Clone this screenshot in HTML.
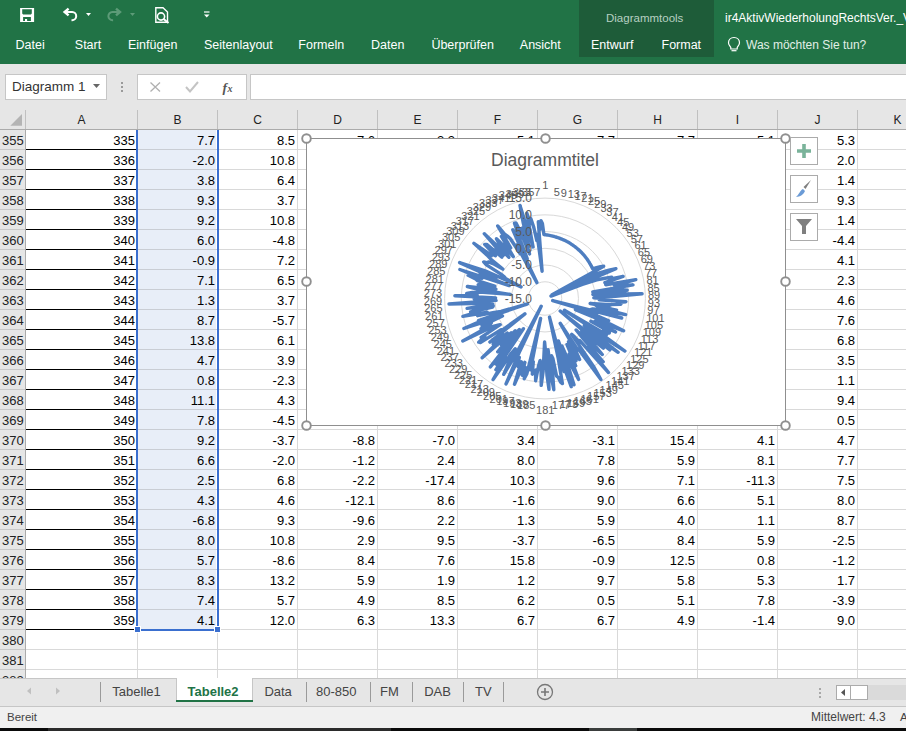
<!DOCTYPE html><html><head><meta charset="utf-8"><style>
html,body{margin:0;padding:0;}body{width:906px;height:731px;overflow:hidden;position:relative;background:#fff;font-family:"Liberation Sans", sans-serif;}
div{box-sizing:border-box;}
.c{position:absolute;height:20px;line-height:22px;font-size:13px;color:#000;text-align:right;white-space:nowrap;}
.rh{position:absolute;left:0;width:25px;height:20px;line-height:22px;font-size:13px;color:#222;text-align:left;padding-left:2px;}
.ch{position:absolute;top:108px;height:21px;line-height:25px;font-size:12px;color:#222;text-align:center;}
.tb{position:absolute;top:30px;height:30px;line-height:30px;font-size:12.5px;color:#fff;white-space:nowrap;}
.st{position:absolute;top:678px;height:27px;line-height:27px;font-size:13px;color:#444;white-space:nowrap;}
</style></head><body>
<div style="position:absolute;left:0px;top:0px;width:906px;height:64px;background:#217346;"></div>
<div style="position:absolute;left:579px;top:0px;width:135px;height:57px;background:#1e5c39;"></div>
<div class="tb" style="left:15.6px;">Datei</div>
<div class="tb" style="left:74.8px;">Start</div>
<div class="tb" style="left:128.0px;">Einfügen</div>
<div class="tb" style="left:204.0px;">Seitenlayout</div>
<div class="tb" style="left:298.3px;">Formeln</div>
<div class="tb" style="left:371.0px;">Daten</div>
<div class="tb" style="left:431.4px;">Überprüfen</div>
<div class="tb" style="left:519.8px;">Ansicht</div>
<div class="tb" style="left:591.0px;">Entwurf</div>
<div class="tb" style="left:661.5px;">Format</div>
<div style="position:absolute;left:606px;top:10px;font-size:11.5px;line-height:16px;color:#b7d0c1;white-space:nowrap;">Diagrammtools</div>
<div style="position:absolute;left:725px;top:9.5px;font-size:12px;line-height:16px;color:#fff;white-space:nowrap;">ir4AktivWiederholungRechtsVer._V</div>
<div class="tb" style="left:746px;color:#e2efe7;font-size:12px;">Was möchten Sie tun?</div>
<svg style="position:absolute;left:726px;top:36px" width="16" height="16"><path d="M8 1.5 C4.5 1.5 2.5 4 2.5 6.8 C2.5 9 4 10 4.8 11.5 V13 H11.2 V11.5 C12 10 13.5 9 13.5 6.8 C13.5 4 11.5 1.5 8 1.5 Z" fill="none" stroke="#fff" stroke-width="1.2"/><path d="M5.5 14.7 H10.5" stroke="#fff" stroke-width="1.2"/></svg>
<svg style="position:absolute;left:0;top:0" width="240" height="30" viewBox="0 0 240 30">
<path fill-rule="evenodd" fill="#fff" d="M20.1 7.9 H34.1 V22.1 H20.1 Z M22.2 9.3 V13.6 L23.1 14.5 H30.9 L31.8 13.6 V9.3 Z M23.1 17 V21 H25 V19 H27.1 V21 H30.9 V17 Z"/>
<path d="M65 12 H72.2 A4.1 4.1 0 0 1 72 20.2 H71.5" fill="none" stroke="#fff" stroke-width="2"/>
<path d="M68.6 8.6 L64.6 12 L68.6 15.4" fill="none" stroke="#fff" stroke-width="2.4"/>
<path d="M86 13 H91 L88.5 16 Z" fill="#fff"/>
<path d="M119.6 12 H112.4 A4.1 4.1 0 0 0 112.6 20.2 H113.1" fill="none" stroke="#5d9b78" stroke-width="2"/>
<path d="M116 8.6 L120 12 L116 15.4" fill="none" stroke="#5d9b78" stroke-width="2.4"/>
<path d="M130 13 H135 L132.5 16 Z" fill="#5d9b78"/>
<path d="M155.8 7.8 H163 L167.5 12 V22.2 H155.8 Z" fill="none" stroke="#fff" stroke-width="1.4"/>
<circle cx="161" cy="16.5" r="3.6" fill="#217346" stroke="#fff" stroke-width="1.6"/>
<path d="M163.6 19 L168.5 23" stroke="#fff" stroke-width="2"/>
<path d="M204 12 H209.5" stroke="#fff" stroke-width="1.2"/>
<path d="M204 14.5 H209.5 L206.75 17.5 Z" fill="#fff"/>
</svg>
<div style="position:absolute;left:0px;top:64px;width:906px;height:45px;background:#e6e6e6;"></div>
<div style="position:absolute;left:5px;top:74px;width:102px;height:26px;background:#fff;border:1px solid #c6c6c6;"></div>
<div style="position:absolute;left:12px;top:79px;font-size:13.5px;line-height:16px;color:#333;white-space:nowrap;">Diagramm 1</div>
<svg style="position:absolute;left:90px;top:78px" width="16" height="16"><path d="M3 6 H10 L6.5 10 Z" fill="#666"/></svg>
<div style="position:absolute;left:121px;top:82px;width:2px;height:2px;background:#9a9a9a;"></div>
<div style="position:absolute;left:121px;top:86px;width:2px;height:2px;background:#9a9a9a;"></div>
<div style="position:absolute;left:121px;top:90px;width:2px;height:2px;background:#9a9a9a;"></div>
<div style="position:absolute;left:137px;top:74px;width:110px;height:26px;background:#fff;border:1px solid #c6c6c6;"></div>
<div style="position:absolute;left:250px;top:74px;width:700px;height:26px;background:#fff;border:1px solid #c6c6c6;"></div>
<svg style="position:absolute;left:137px;top:74px" width="110" height="26">
<path d="M13.5 8.5 L23 17.5 M23 8.5 L13.5 17.5" stroke="#b0b0b0" stroke-width="1.3"/>
<path d="M49 13 L53 17.5 L61 8" fill="none" stroke="#c4c4c4" stroke-width="2"/>
<text x="85.5" y="17.5" font-family="Liberation Serif" font-style="italic" font-weight="bold" font-size="13.5" fill="#555">f</text>
<text x="90.5" y="18" font-family="Liberation Serif" font-style="italic" font-weight="bold" font-size="10" fill="#555">x</text>
</svg>
<div style="position:absolute;left:0px;top:108px;width:906px;height:22px;background:#e6e6e6;"></div>
<div style="position:absolute;left:0px;top:129px;width:906px;height:1px;background:#ababab;"></div>
<svg style="position:absolute;left:0;top:108px" width="26" height="21"><path d="M22 6 V17.7 H10.3 Z" fill="#b4b4b4"/></svg>
<div class="ch" style="left:26px;width:111px;">A</div>
<div class="ch" style="left:138px;width:79px;">B</div>
<div class="ch" style="left:218px;width:79px;">C</div>
<div class="ch" style="left:298px;width:79px;">D</div>
<div class="ch" style="left:378px;width:79px;">E</div>
<div class="ch" style="left:458px;width:79px;">F</div>
<div class="ch" style="left:538px;width:79px;">G</div>
<div class="ch" style="left:618px;width:79px;">H</div>
<div class="ch" style="left:698px;width:79px;">I</div>
<div class="ch" style="left:778px;width:79px;">J</div>
<div class="ch" style="left:858px;width:79px;">K</div>
<div style="position:absolute;left:25px;top:110px;width:1px;height:19px;background:#c0c0c0;"></div>
<div style="position:absolute;left:137px;top:110px;width:1px;height:19px;background:#c0c0c0;"></div>
<div style="position:absolute;left:217px;top:110px;width:1px;height:19px;background:#c0c0c0;"></div>
<div style="position:absolute;left:297px;top:110px;width:1px;height:19px;background:#c0c0c0;"></div>
<div style="position:absolute;left:377px;top:110px;width:1px;height:19px;background:#c0c0c0;"></div>
<div style="position:absolute;left:457px;top:110px;width:1px;height:19px;background:#c0c0c0;"></div>
<div style="position:absolute;left:537px;top:110px;width:1px;height:19px;background:#c0c0c0;"></div>
<div style="position:absolute;left:617px;top:110px;width:1px;height:19px;background:#c0c0c0;"></div>
<div style="position:absolute;left:697px;top:110px;width:1px;height:19px;background:#c0c0c0;"></div>
<div style="position:absolute;left:777px;top:110px;width:1px;height:19px;background:#c0c0c0;"></div>
<div style="position:absolute;left:857px;top:110px;width:1px;height:19px;background:#c0c0c0;"></div>
<div style="position:absolute;left:0px;top:130px;width:26px;height:548px;background:#e6e6e6;"></div>
<div style="position:absolute;left:25px;top:130px;width:1px;height:548px;background:#ababab;"></div>
<div class="rh" style="top:130px;">355</div>
<div style="position:absolute;left:0px;top:149px;width:25px;height:1px;background:#c8c8c8;"></div>
<div class="rh" style="top:150px;">356</div>
<div style="position:absolute;left:0px;top:169px;width:25px;height:1px;background:#c8c8c8;"></div>
<div class="rh" style="top:170px;">357</div>
<div style="position:absolute;left:0px;top:189px;width:25px;height:1px;background:#c8c8c8;"></div>
<div class="rh" style="top:190px;">358</div>
<div style="position:absolute;left:0px;top:209px;width:25px;height:1px;background:#c8c8c8;"></div>
<div class="rh" style="top:210px;">359</div>
<div style="position:absolute;left:0px;top:229px;width:25px;height:1px;background:#c8c8c8;"></div>
<div class="rh" style="top:230px;">360</div>
<div style="position:absolute;left:0px;top:249px;width:25px;height:1px;background:#c8c8c8;"></div>
<div class="rh" style="top:250px;">361</div>
<div style="position:absolute;left:0px;top:269px;width:25px;height:1px;background:#c8c8c8;"></div>
<div class="rh" style="top:270px;">362</div>
<div style="position:absolute;left:0px;top:289px;width:25px;height:1px;background:#c8c8c8;"></div>
<div class="rh" style="top:290px;">363</div>
<div style="position:absolute;left:0px;top:309px;width:25px;height:1px;background:#c8c8c8;"></div>
<div class="rh" style="top:310px;">364</div>
<div style="position:absolute;left:0px;top:329px;width:25px;height:1px;background:#c8c8c8;"></div>
<div class="rh" style="top:330px;">365</div>
<div style="position:absolute;left:0px;top:349px;width:25px;height:1px;background:#c8c8c8;"></div>
<div class="rh" style="top:350px;">366</div>
<div style="position:absolute;left:0px;top:369px;width:25px;height:1px;background:#c8c8c8;"></div>
<div class="rh" style="top:370px;">367</div>
<div style="position:absolute;left:0px;top:389px;width:25px;height:1px;background:#c8c8c8;"></div>
<div class="rh" style="top:390px;">368</div>
<div style="position:absolute;left:0px;top:409px;width:25px;height:1px;background:#c8c8c8;"></div>
<div class="rh" style="top:410px;">369</div>
<div style="position:absolute;left:0px;top:429px;width:25px;height:1px;background:#c8c8c8;"></div>
<div class="rh" style="top:430px;">370</div>
<div style="position:absolute;left:0px;top:449px;width:25px;height:1px;background:#c8c8c8;"></div>
<div class="rh" style="top:450px;">371</div>
<div style="position:absolute;left:0px;top:469px;width:25px;height:1px;background:#c8c8c8;"></div>
<div class="rh" style="top:470px;">372</div>
<div style="position:absolute;left:0px;top:489px;width:25px;height:1px;background:#c8c8c8;"></div>
<div class="rh" style="top:490px;">373</div>
<div style="position:absolute;left:0px;top:509px;width:25px;height:1px;background:#c8c8c8;"></div>
<div class="rh" style="top:510px;">374</div>
<div style="position:absolute;left:0px;top:529px;width:25px;height:1px;background:#c8c8c8;"></div>
<div class="rh" style="top:530px;">375</div>
<div style="position:absolute;left:0px;top:549px;width:25px;height:1px;background:#c8c8c8;"></div>
<div class="rh" style="top:550px;">376</div>
<div style="position:absolute;left:0px;top:569px;width:25px;height:1px;background:#c8c8c8;"></div>
<div class="rh" style="top:570px;">377</div>
<div style="position:absolute;left:0px;top:589px;width:25px;height:1px;background:#c8c8c8;"></div>
<div class="rh" style="top:590px;">378</div>
<div style="position:absolute;left:0px;top:609px;width:25px;height:1px;background:#c8c8c8;"></div>
<div class="rh" style="top:610px;">379</div>
<div style="position:absolute;left:0px;top:629px;width:25px;height:1px;background:#c8c8c8;"></div>
<div class="rh" style="top:630px;">380</div>
<div style="position:absolute;left:0px;top:649px;width:25px;height:1px;background:#c8c8c8;"></div>
<div class="rh" style="top:650px;">381</div>
<div style="position:absolute;left:0px;top:669px;width:25px;height:1px;background:#c8c8c8;"></div>
<div class="rh" style="top:670px;">382</div>
<div style="position:absolute;left:0px;top:689px;width:25px;height:1px;background:#c8c8c8;"></div>
<div style="position:absolute;left:137px;top:130px;width:1px;height:548px;background:#d9d9d9;"></div>
<div style="position:absolute;left:217px;top:130px;width:1px;height:548px;background:#d9d9d9;"></div>
<div style="position:absolute;left:297px;top:130px;width:1px;height:548px;background:#d9d9d9;"></div>
<div style="position:absolute;left:377px;top:130px;width:1px;height:548px;background:#d9d9d9;"></div>
<div style="position:absolute;left:457px;top:130px;width:1px;height:548px;background:#d9d9d9;"></div>
<div style="position:absolute;left:537px;top:130px;width:1px;height:548px;background:#d9d9d9;"></div>
<div style="position:absolute;left:617px;top:130px;width:1px;height:548px;background:#d9d9d9;"></div>
<div style="position:absolute;left:697px;top:130px;width:1px;height:548px;background:#d9d9d9;"></div>
<div style="position:absolute;left:777px;top:130px;width:1px;height:548px;background:#d9d9d9;"></div>
<div style="position:absolute;left:857px;top:130px;width:1px;height:548px;background:#d9d9d9;"></div>
<div style="position:absolute;left:26px;top:149px;width:880px;height:1px;background:#d9d9d9;"></div>
<div style="position:absolute;left:26px;top:169px;width:880px;height:1px;background:#d9d9d9;"></div>
<div style="position:absolute;left:26px;top:189px;width:880px;height:1px;background:#d9d9d9;"></div>
<div style="position:absolute;left:26px;top:209px;width:880px;height:1px;background:#d9d9d9;"></div>
<div style="position:absolute;left:26px;top:229px;width:880px;height:1px;background:#d9d9d9;"></div>
<div style="position:absolute;left:26px;top:249px;width:880px;height:1px;background:#d9d9d9;"></div>
<div style="position:absolute;left:26px;top:269px;width:880px;height:1px;background:#d9d9d9;"></div>
<div style="position:absolute;left:26px;top:289px;width:880px;height:1px;background:#d9d9d9;"></div>
<div style="position:absolute;left:26px;top:309px;width:880px;height:1px;background:#d9d9d9;"></div>
<div style="position:absolute;left:26px;top:329px;width:880px;height:1px;background:#d9d9d9;"></div>
<div style="position:absolute;left:26px;top:349px;width:880px;height:1px;background:#d9d9d9;"></div>
<div style="position:absolute;left:26px;top:369px;width:880px;height:1px;background:#d9d9d9;"></div>
<div style="position:absolute;left:26px;top:389px;width:880px;height:1px;background:#d9d9d9;"></div>
<div style="position:absolute;left:26px;top:409px;width:880px;height:1px;background:#d9d9d9;"></div>
<div style="position:absolute;left:26px;top:429px;width:880px;height:1px;background:#d9d9d9;"></div>
<div style="position:absolute;left:26px;top:449px;width:880px;height:1px;background:#d9d9d9;"></div>
<div style="position:absolute;left:26px;top:469px;width:880px;height:1px;background:#d9d9d9;"></div>
<div style="position:absolute;left:26px;top:489px;width:880px;height:1px;background:#d9d9d9;"></div>
<div style="position:absolute;left:26px;top:509px;width:880px;height:1px;background:#d9d9d9;"></div>
<div style="position:absolute;left:26px;top:529px;width:880px;height:1px;background:#d9d9d9;"></div>
<div style="position:absolute;left:26px;top:549px;width:880px;height:1px;background:#d9d9d9;"></div>
<div style="position:absolute;left:26px;top:569px;width:880px;height:1px;background:#d9d9d9;"></div>
<div style="position:absolute;left:26px;top:589px;width:880px;height:1px;background:#d9d9d9;"></div>
<div style="position:absolute;left:26px;top:609px;width:880px;height:1px;background:#d9d9d9;"></div>
<div style="position:absolute;left:26px;top:629px;width:880px;height:1px;background:#d9d9d9;"></div>
<div style="position:absolute;left:26px;top:649px;width:880px;height:1px;background:#d9d9d9;"></div>
<div style="position:absolute;left:26px;top:669px;width:880px;height:1px;background:#d9d9d9;"></div>
<div style="position:absolute;left:138px;top:130px;width:78px;height:500px;background:#e8eef8;"></div>
<div style="position:absolute;left:138px;top:149px;width:79px;height:1px;background:#c9cdd4;"></div>
<div style="position:absolute;left:138px;top:169px;width:79px;height:1px;background:#c9cdd4;"></div>
<div style="position:absolute;left:138px;top:189px;width:79px;height:1px;background:#c9cdd4;"></div>
<div style="position:absolute;left:138px;top:209px;width:79px;height:1px;background:#c9cdd4;"></div>
<div style="position:absolute;left:138px;top:229px;width:79px;height:1px;background:#c9cdd4;"></div>
<div style="position:absolute;left:138px;top:249px;width:79px;height:1px;background:#c9cdd4;"></div>
<div style="position:absolute;left:138px;top:269px;width:79px;height:1px;background:#c9cdd4;"></div>
<div style="position:absolute;left:138px;top:289px;width:79px;height:1px;background:#c9cdd4;"></div>
<div style="position:absolute;left:138px;top:309px;width:79px;height:1px;background:#c9cdd4;"></div>
<div style="position:absolute;left:138px;top:329px;width:79px;height:1px;background:#c9cdd4;"></div>
<div style="position:absolute;left:138px;top:349px;width:79px;height:1px;background:#c9cdd4;"></div>
<div style="position:absolute;left:138px;top:369px;width:79px;height:1px;background:#c9cdd4;"></div>
<div style="position:absolute;left:138px;top:389px;width:79px;height:1px;background:#c9cdd4;"></div>
<div style="position:absolute;left:138px;top:409px;width:79px;height:1px;background:#c9cdd4;"></div>
<div style="position:absolute;left:138px;top:429px;width:79px;height:1px;background:#c9cdd4;"></div>
<div style="position:absolute;left:138px;top:449px;width:79px;height:1px;background:#c9cdd4;"></div>
<div style="position:absolute;left:138px;top:469px;width:79px;height:1px;background:#c9cdd4;"></div>
<div style="position:absolute;left:138px;top:489px;width:79px;height:1px;background:#c9cdd4;"></div>
<div style="position:absolute;left:138px;top:509px;width:79px;height:1px;background:#c9cdd4;"></div>
<div style="position:absolute;left:138px;top:529px;width:79px;height:1px;background:#c9cdd4;"></div>
<div style="position:absolute;left:138px;top:549px;width:79px;height:1px;background:#c9cdd4;"></div>
<div style="position:absolute;left:138px;top:569px;width:79px;height:1px;background:#c9cdd4;"></div>
<div style="position:absolute;left:138px;top:589px;width:79px;height:1px;background:#c9cdd4;"></div>
<div style="position:absolute;left:138px;top:609px;width:79px;height:1px;background:#c9cdd4;"></div>
<div style="position:absolute;left:26px;top:149px;width:110px;height:1px;background:#000;"></div>
<div style="position:absolute;left:26px;top:169px;width:110px;height:1px;background:#000;"></div>
<div style="position:absolute;left:26px;top:189px;width:110px;height:1px;background:#000;"></div>
<div style="position:absolute;left:26px;top:209px;width:110px;height:1px;background:#000;"></div>
<div style="position:absolute;left:26px;top:229px;width:110px;height:1px;background:#000;"></div>
<div style="position:absolute;left:26px;top:249px;width:110px;height:1px;background:#000;"></div>
<div style="position:absolute;left:26px;top:269px;width:110px;height:1px;background:#000;"></div>
<div style="position:absolute;left:26px;top:289px;width:110px;height:1px;background:#000;"></div>
<div style="position:absolute;left:26px;top:309px;width:110px;height:1px;background:#000;"></div>
<div style="position:absolute;left:26px;top:329px;width:110px;height:1px;background:#000;"></div>
<div style="position:absolute;left:26px;top:349px;width:110px;height:1px;background:#000;"></div>
<div style="position:absolute;left:26px;top:369px;width:110px;height:1px;background:#000;"></div>
<div style="position:absolute;left:26px;top:389px;width:110px;height:1px;background:#000;"></div>
<div style="position:absolute;left:26px;top:409px;width:110px;height:1px;background:#000;"></div>
<div style="position:absolute;left:26px;top:429px;width:110px;height:1px;background:#000;"></div>
<div style="position:absolute;left:26px;top:449px;width:110px;height:1px;background:#000;"></div>
<div style="position:absolute;left:26px;top:469px;width:110px;height:1px;background:#000;"></div>
<div style="position:absolute;left:26px;top:489px;width:110px;height:1px;background:#000;"></div>
<div style="position:absolute;left:26px;top:509px;width:110px;height:1px;background:#000;"></div>
<div style="position:absolute;left:26px;top:529px;width:110px;height:1px;background:#000;"></div>
<div style="position:absolute;left:26px;top:549px;width:110px;height:1px;background:#000;"></div>
<div style="position:absolute;left:26px;top:569px;width:110px;height:1px;background:#000;"></div>
<div style="position:absolute;left:26px;top:589px;width:110px;height:1px;background:#000;"></div>
<div style="position:absolute;left:26px;top:609px;width:110px;height:1px;background:#000;"></div>
<div style="position:absolute;left:26px;top:629px;width:110px;height:1px;background:#000;"></div>
<div class="c" style="top:130px;left:55px;width:80px;">335</div>
<div class="c" style="top:130px;left:135px;width:80px;">7.7</div>
<div class="c" style="top:130px;left:215px;width:80px;">8.5</div>
<div class="c" style="top:130px;left:295px;width:80px;">7.6</div>
<div class="c" style="top:130px;left:375px;width:80px;">3.3</div>
<div class="c" style="top:130px;left:455px;width:80px;">5.1</div>
<div class="c" style="top:130px;left:535px;width:80px;">7.7</div>
<div class="c" style="top:130px;left:615px;width:80px;">7.7</div>
<div class="c" style="top:130px;left:695px;width:80px;">5.1</div>
<div class="c" style="top:130px;left:775px;width:80px;">5.3</div>
<div class="c" style="top:150px;left:55px;width:80px;">336</div>
<div class="c" style="top:150px;left:135px;width:80px;">-2.0</div>
<div class="c" style="top:150px;left:215px;width:80px;">10.8</div>
<div class="c" style="top:150px;left:775px;width:80px;">2.0</div>
<div class="c" style="top:170px;left:55px;width:80px;">337</div>
<div class="c" style="top:170px;left:135px;width:80px;">3.8</div>
<div class="c" style="top:170px;left:215px;width:80px;">6.4</div>
<div class="c" style="top:170px;left:775px;width:80px;">1.4</div>
<div class="c" style="top:190px;left:55px;width:80px;">338</div>
<div class="c" style="top:190px;left:135px;width:80px;">9.3</div>
<div class="c" style="top:190px;left:215px;width:80px;">3.7</div>
<div class="c" style="top:190px;left:775px;width:80px;">9.3</div>
<div class="c" style="top:210px;left:55px;width:80px;">339</div>
<div class="c" style="top:210px;left:135px;width:80px;">9.2</div>
<div class="c" style="top:210px;left:215px;width:80px;">10.8</div>
<div class="c" style="top:210px;left:775px;width:80px;">1.4</div>
<div class="c" style="top:230px;left:55px;width:80px;">340</div>
<div class="c" style="top:230px;left:135px;width:80px;">6.0</div>
<div class="c" style="top:230px;left:215px;width:80px;">-4.8</div>
<div class="c" style="top:230px;left:775px;width:80px;">-4.4</div>
<div class="c" style="top:250px;left:55px;width:80px;">341</div>
<div class="c" style="top:250px;left:135px;width:80px;">-0.9</div>
<div class="c" style="top:250px;left:215px;width:80px;">7.2</div>
<div class="c" style="top:250px;left:775px;width:80px;">4.1</div>
<div class="c" style="top:270px;left:55px;width:80px;">342</div>
<div class="c" style="top:270px;left:135px;width:80px;">7.1</div>
<div class="c" style="top:270px;left:215px;width:80px;">6.5</div>
<div class="c" style="top:270px;left:775px;width:80px;">2.3</div>
<div class="c" style="top:290px;left:55px;width:80px;">343</div>
<div class="c" style="top:290px;left:135px;width:80px;">1.3</div>
<div class="c" style="top:290px;left:215px;width:80px;">3.7</div>
<div class="c" style="top:290px;left:775px;width:80px;">4.6</div>
<div class="c" style="top:310px;left:55px;width:80px;">344</div>
<div class="c" style="top:310px;left:135px;width:80px;">8.7</div>
<div class="c" style="top:310px;left:215px;width:80px;">-5.7</div>
<div class="c" style="top:310px;left:775px;width:80px;">7.6</div>
<div class="c" style="top:330px;left:55px;width:80px;">345</div>
<div class="c" style="top:330px;left:135px;width:80px;">13.8</div>
<div class="c" style="top:330px;left:215px;width:80px;">6.1</div>
<div class="c" style="top:330px;left:775px;width:80px;">6.8</div>
<div class="c" style="top:350px;left:55px;width:80px;">346</div>
<div class="c" style="top:350px;left:135px;width:80px;">4.7</div>
<div class="c" style="top:350px;left:215px;width:80px;">3.9</div>
<div class="c" style="top:350px;left:775px;width:80px;">3.5</div>
<div class="c" style="top:370px;left:55px;width:80px;">347</div>
<div class="c" style="top:370px;left:135px;width:80px;">0.8</div>
<div class="c" style="top:370px;left:215px;width:80px;">-2.3</div>
<div class="c" style="top:370px;left:775px;width:80px;">1.1</div>
<div class="c" style="top:390px;left:55px;width:80px;">348</div>
<div class="c" style="top:390px;left:135px;width:80px;">11.1</div>
<div class="c" style="top:390px;left:215px;width:80px;">4.3</div>
<div class="c" style="top:390px;left:775px;width:80px;">9.4</div>
<div class="c" style="top:410px;left:55px;width:80px;">349</div>
<div class="c" style="top:410px;left:135px;width:80px;">7.8</div>
<div class="c" style="top:410px;left:215px;width:80px;">-4.5</div>
<div class="c" style="top:410px;left:775px;width:80px;">0.5</div>
<div class="c" style="top:430px;left:55px;width:80px;">350</div>
<div class="c" style="top:430px;left:135px;width:80px;">9.2</div>
<div class="c" style="top:430px;left:215px;width:80px;">-3.7</div>
<div class="c" style="top:430px;left:295px;width:80px;">-8.8</div>
<div class="c" style="top:430px;left:375px;width:80px;">-7.0</div>
<div class="c" style="top:430px;left:455px;width:80px;">3.4</div>
<div class="c" style="top:430px;left:535px;width:80px;">-3.1</div>
<div class="c" style="top:430px;left:615px;width:80px;">15.4</div>
<div class="c" style="top:430px;left:695px;width:80px;">4.1</div>
<div class="c" style="top:430px;left:775px;width:80px;">4.7</div>
<div class="c" style="top:450px;left:55px;width:80px;">351</div>
<div class="c" style="top:450px;left:135px;width:80px;">6.6</div>
<div class="c" style="top:450px;left:215px;width:80px;">-2.0</div>
<div class="c" style="top:450px;left:295px;width:80px;">-1.2</div>
<div class="c" style="top:450px;left:375px;width:80px;">2.4</div>
<div class="c" style="top:450px;left:455px;width:80px;">8.0</div>
<div class="c" style="top:450px;left:535px;width:80px;">7.8</div>
<div class="c" style="top:450px;left:615px;width:80px;">5.9</div>
<div class="c" style="top:450px;left:695px;width:80px;">8.1</div>
<div class="c" style="top:450px;left:775px;width:80px;">7.7</div>
<div class="c" style="top:470px;left:55px;width:80px;">352</div>
<div class="c" style="top:470px;left:135px;width:80px;">2.5</div>
<div class="c" style="top:470px;left:215px;width:80px;">6.8</div>
<div class="c" style="top:470px;left:295px;width:80px;">-2.2</div>
<div class="c" style="top:470px;left:375px;width:80px;">-17.4</div>
<div class="c" style="top:470px;left:455px;width:80px;">10.3</div>
<div class="c" style="top:470px;left:535px;width:80px;">9.6</div>
<div class="c" style="top:470px;left:615px;width:80px;">7.1</div>
<div class="c" style="top:470px;left:695px;width:80px;">-11.3</div>
<div class="c" style="top:470px;left:775px;width:80px;">7.5</div>
<div class="c" style="top:490px;left:55px;width:80px;">353</div>
<div class="c" style="top:490px;left:135px;width:80px;">4.3</div>
<div class="c" style="top:490px;left:215px;width:80px;">4.6</div>
<div class="c" style="top:490px;left:295px;width:80px;">-12.1</div>
<div class="c" style="top:490px;left:375px;width:80px;">8.6</div>
<div class="c" style="top:490px;left:455px;width:80px;">-1.6</div>
<div class="c" style="top:490px;left:535px;width:80px;">9.0</div>
<div class="c" style="top:490px;left:615px;width:80px;">6.6</div>
<div class="c" style="top:490px;left:695px;width:80px;">5.1</div>
<div class="c" style="top:490px;left:775px;width:80px;">8.0</div>
<div class="c" style="top:510px;left:55px;width:80px;">354</div>
<div class="c" style="top:510px;left:135px;width:80px;">-6.8</div>
<div class="c" style="top:510px;left:215px;width:80px;">9.3</div>
<div class="c" style="top:510px;left:295px;width:80px;">-9.6</div>
<div class="c" style="top:510px;left:375px;width:80px;">2.2</div>
<div class="c" style="top:510px;left:455px;width:80px;">1.3</div>
<div class="c" style="top:510px;left:535px;width:80px;">5.9</div>
<div class="c" style="top:510px;left:615px;width:80px;">4.0</div>
<div class="c" style="top:510px;left:695px;width:80px;">1.1</div>
<div class="c" style="top:510px;left:775px;width:80px;">8.7</div>
<div class="c" style="top:530px;left:55px;width:80px;">355</div>
<div class="c" style="top:530px;left:135px;width:80px;">8.0</div>
<div class="c" style="top:530px;left:215px;width:80px;">10.8</div>
<div class="c" style="top:530px;left:295px;width:80px;">2.9</div>
<div class="c" style="top:530px;left:375px;width:80px;">9.5</div>
<div class="c" style="top:530px;left:455px;width:80px;">-3.7</div>
<div class="c" style="top:530px;left:535px;width:80px;">-6.5</div>
<div class="c" style="top:530px;left:615px;width:80px;">8.4</div>
<div class="c" style="top:530px;left:695px;width:80px;">5.9</div>
<div class="c" style="top:530px;left:775px;width:80px;">-2.5</div>
<div class="c" style="top:550px;left:55px;width:80px;">356</div>
<div class="c" style="top:550px;left:135px;width:80px;">5.7</div>
<div class="c" style="top:550px;left:215px;width:80px;">-8.6</div>
<div class="c" style="top:550px;left:295px;width:80px;">8.4</div>
<div class="c" style="top:550px;left:375px;width:80px;">7.6</div>
<div class="c" style="top:550px;left:455px;width:80px;">15.8</div>
<div class="c" style="top:550px;left:535px;width:80px;">-0.9</div>
<div class="c" style="top:550px;left:615px;width:80px;">12.5</div>
<div class="c" style="top:550px;left:695px;width:80px;">0.8</div>
<div class="c" style="top:550px;left:775px;width:80px;">-1.2</div>
<div class="c" style="top:570px;left:55px;width:80px;">357</div>
<div class="c" style="top:570px;left:135px;width:80px;">8.3</div>
<div class="c" style="top:570px;left:215px;width:80px;">13.2</div>
<div class="c" style="top:570px;left:295px;width:80px;">5.9</div>
<div class="c" style="top:570px;left:375px;width:80px;">1.9</div>
<div class="c" style="top:570px;left:455px;width:80px;">1.2</div>
<div class="c" style="top:570px;left:535px;width:80px;">9.7</div>
<div class="c" style="top:570px;left:615px;width:80px;">5.8</div>
<div class="c" style="top:570px;left:695px;width:80px;">5.3</div>
<div class="c" style="top:570px;left:775px;width:80px;">1.7</div>
<div class="c" style="top:590px;left:55px;width:80px;">358</div>
<div class="c" style="top:590px;left:135px;width:80px;">7.4</div>
<div class="c" style="top:590px;left:215px;width:80px;">5.7</div>
<div class="c" style="top:590px;left:295px;width:80px;">4.9</div>
<div class="c" style="top:590px;left:375px;width:80px;">8.5</div>
<div class="c" style="top:590px;left:455px;width:80px;">6.2</div>
<div class="c" style="top:590px;left:535px;width:80px;">0.5</div>
<div class="c" style="top:590px;left:615px;width:80px;">5.1</div>
<div class="c" style="top:590px;left:695px;width:80px;">7.8</div>
<div class="c" style="top:590px;left:775px;width:80px;">-3.9</div>
<div class="c" style="top:610px;left:55px;width:80px;">359</div>
<div class="c" style="top:610px;left:135px;width:80px;">4.1</div>
<div class="c" style="top:610px;left:215px;width:80px;">12.0</div>
<div class="c" style="top:610px;left:295px;width:80px;">6.3</div>
<div class="c" style="top:610px;left:375px;width:80px;">13.3</div>
<div class="c" style="top:610px;left:455px;width:80px;">6.7</div>
<div class="c" style="top:610px;left:535px;width:80px;">6.7</div>
<div class="c" style="top:610px;left:615px;width:80px;">4.9</div>
<div class="c" style="top:610px;left:695px;width:80px;">-1.4</div>
<div class="c" style="top:610px;left:775px;width:80px;">9.0</div>
<div style="position:absolute;left:136px;top:130px;width:2px;height:500px;background:#3a6fcf"></div>
<div style="position:absolute;left:217px;top:130px;width:2px;height:500px;background:#3a6fcf"></div>
<div style="position:absolute;left:136px;top:629px;width:83px;height:2px;background:#3a6fcf"></div>
<div style="position:absolute;left:135px;top:627px;width:5px;height:5px;background:#3a6fcf;outline:1px solid #fff;"></div>
<div style="position:absolute;left:215px;top:627px;width:5px;height:5px;background:#3a6fcf;outline:1px solid #fff;"></div>
<svg style="position:absolute;left:0;top:0" width="906" height="731" viewBox="0 0 906 731">
<rect x="306.5" y="138.5" width="479" height="287" fill="#fff" stroke="#8f8f8f" stroke-width="1"/>
<circle cx="545.0" cy="298.5" r="16.73" fill="none" stroke="#d9d9d9" stroke-width="1"/>
<circle cx="545.0" cy="298.5" r="33.47" fill="none" stroke="#d9d9d9" stroke-width="1"/>
<circle cx="545.0" cy="298.5" r="50.20" fill="none" stroke="#d9d9d9" stroke-width="1"/>
<circle cx="545.0" cy="298.5" r="66.93" fill="none" stroke="#d9d9d9" stroke-width="1"/>
<circle cx="545.0" cy="298.5" r="83.67" fill="none" stroke="#d9d9d9" stroke-width="1"/>
<circle cx="545.0" cy="298.5" r="100.40" fill="none" stroke="#d9d9d9" stroke-width="1"/>
<path d="M545.0 234.7 L546.1 234.8 L547.2 235.0 L548.3 235.2 L549.4 235.4 L550.5 235.6 L551.6 235.8 L552.7 236.1 L553.8 236.4 L554.8 236.7 L555.9 237.0 L556.9 237.3 L558.0 237.7 L559.0 238.0 L560.0 238.4 L561.0 238.8 L562.0 239.2 L563.0 239.7 L564.0 240.1 L565.0 240.6 L566.0 241.1 L566.9 241.6 L567.9 242.1 L568.8 242.6 L569.7 243.1 L570.6 243.7 L571.5 244.3 L572.4 244.9 L573.3 245.5 L574.1 246.1 L575.0 246.7 L575.8 247.4 L576.6 248.0 L577.4 248.7 L578.2 249.4 L579.0 250.1 L579.8 250.8 L580.5 251.5 L581.3 252.3 L582.0 253.0 L582.7 253.8 L583.4 254.5 L584.1 255.3 L584.7 256.1 L585.4 256.9 L586.0 257.7 L586.6 258.5 L587.2 259.3 L587.8 260.2 L588.3 261.0 L588.9 261.9 L589.4 262.7 L589.9 263.6 L590.4 264.4 L590.9 265.3 L591.4 266.2 L591.8 267.1 L592.3 268.0 L592.7 268.9 L596.5 267.7 L600.5 266.7 L603.7 266.2 L552.1 294.8 L571.8 285.0 L594.5 274.5 L601.3 272.5 L609.0 270.2 L615.9 268.7 L551.0 296.1 L582.4 284.3 L596.7 279.9 L603.7 278.5 L611.6 277.1 L609.4 279.1 L623.1 276.4 L604.9 282.7 L607.8 283.1 L605.8 284.7 L635.8 279.6 L614.5 285.3 L620.9 285.4 L633.0 284.9 L592.8 292.0 L620.4 289.5 L627.2 290.2 L592.9 294.5 L610.3 294.2 L642.1 293.8 L615.4 296.3 L593.8 297.9 L605.9 298.8 L599.2 299.7 L625.9 301.7 L617.2 302.6 L620.9 304.2 L610.7 304.6 L590.1 303.5 L609.1 306.7 L596.5 306.0 L616.6 310.2 L607.2 309.8 L625.6 314.6 L592.8 308.9 L591.1 309.4 L621.7 318.0 L552.7 300.6 L587.3 310.9 L596.6 314.6 L595.9 315.3 L608.6 320.8 L575.4 309.7 L609.7 323.7 L623.6 330.8 L597.1 321.0 L594.9 321.1 L615.5 331.9 L591.0 321.3 L609.5 331.8 L609.3 333.1 L603.1 331.1 L606.6 334.6 L564.4 310.3 L601.9 334.5 L624.9 351.1 L584.3 325.4 L590.1 330.5 L618.1 352.3 L595.1 336.7 L609.9 349.9 L560.2 311.0 L603.4 348.1 L581.8 330.9 L593.6 342.8 L595.1 345.8 L602.3 354.5 L576.1 330.0 L583.8 339.3 L603.2 361.8 L588.3 347.2 L608.5 372.5 L579.8 340.6 L580.2 342.6 L574.6 336.9 L571.7 334.4 L593.4 366.2 L600.9 379.6 L579.9 351.1 L576.4 347.7 L560.2 323.3 L574.9 349.0 L579.6 359.5 L568.5 341.6 L575.8 357.5 L576.1 360.7 L567.0 344.5 L575.7 365.7 L569.2 354.0 L578.6 379.4 L572.6 368.3 L567.8 359.3 L561.9 346.0 L574.0 384.8 L558.4 340.9 L571.2 386.7 L564.1 367.2 L564.0 371.6 L549.5 317.1 L558.2 358.1 L562.4 383.6 L560.6 382.2 L558.2 377.3 L556.6 376.2 L552.9 358.6 L551.5 355.8 L553.8 389.7 L551.1 375.6 L548.1 349.7 L549.0 389.4 L547.0 375.6 L545.4 349.8 L544.6 342.0 L543.1 371.5 L541.2 385.4 L541.0 363.3 L540.1 360.6 L538.5 366.0 L535.6 380.8 L535.6 370.0 L534.1 371.1 L532.3 374.1 L533.3 361.6 L530.5 369.8 L540.6 318.5 L526.9 373.7 L524.2 378.8 L525.8 367.7 L522.2 375.2 L524.8 362.3 L521.5 368.4 L514.5 384.3 L521.3 361.8 L518.1 366.5 L517.9 363.8 L519.3 357.3 L506.0 383.9 L519.8 351.2 L541.2 306.2 L514.8 356.4 L503.7 374.3 L508.8 362.3 L515.2 348.8 L511.5 353.0 L493.1 379.6 L505.7 357.7 L495.9 369.6 L523.4 328.7 L496.3 364.1 L513.5 339.4 L490.4 366.9 L519.4 329.5 L506.7 343.1 L497.7 351.8 L515.3 330.7 L501.1 344.6 L511.2 332.8 L500.2 342.3 L482.2 357.8 L507.2 333.0 L493.2 344.1 L497.7 338.7 L502.3 333.5 L489.9 342.1 L524.9 313.9 L500.4 331.3 L501.1 329.6 L480.4 342.6 L478.7 342.2 L484.8 336.6 L481.1 337.4 L500.2 324.7 L497.0 325.5 L493.1 326.5 L462.8 341.0 L490.6 325.4 L481.0 328.8 L491.4 322.7 L482.0 325.7 L502.5 315.9 L487.7 320.9 L463.9 328.5 L480.9 321.0 L478.4 320.5 L527.4 304.0 L501.0 311.4 L494.3 312.4 L477.6 315.7 L487.2 312.2 L462.9 316.4 L480.0 311.5 L470.5 312.0 L492.7 307.0 L493.2 306.0 L467.1 308.4 L492.9 304.2 L487.9 303.8 L482.6 303.2 L449.0 304.0 L496.1 300.4 L475.3 300.0 L474.2 298.8 L495.6 297.9 L454.9 295.7 L477.2 295.2 L466.7 293.4 L472.4 292.4 L483.0 292.2 L510.3 294.4 L477.1 289.2 L467.4 286.5 L487.9 288.7 L495.9 289.1 L478.2 284.6 L481.6 284.1 L494.7 286.2 L477.3 280.6 L475.6 278.9 L468.1 275.3 L482.0 278.3 L459.9 269.5 L509.2 285.6 L480.1 273.8 L496.0 278.9 L459.6 262.6 L474.3 267.3 L485.1 270.8 L521.1 286.9 L505.5 278.5 L504.8 277.3 L502.1 274.9 L486.4 264.9 L483.7 261.9 L487.6 262.9 L488.3 261.9 L493.0 263.6 L502.8 269.1 L491.8 260.1 L486.8 254.9 L473.9 243.3 L491.6 255.5 L490.8 253.2 L495.5 255.7 L484.7 244.4 L486.7 244.4 L501.9 257.1 L495.6 249.3 L503.2 255.4 L484.3 233.7 L498.7 247.2 L508.9 257.2 L500.2 245.4 L496.5 238.8 L504.0 246.2 L513.3 256.6 L508.6 248.6 L501.4 236.5 L510.7 247.9 L497.7 225.9 L504.6 234.0 L507.4 236.1 L510.4 238.7 L520.0 253.5 L516.5 245.1 L536.9 282.6 L524.8 257.3 L512.8 229.7 L527.3 258.8 L520.4 240.6 L514.5 223.1 L515.9 222.9 L520.9 232.5 L529.6 253.9 L522.1 228.2 L529.0 246.3 L523.1 222.3 L520.0 205.4 L529.0 234.5 L533.1 247.0 L526.8 213.1 L530.4 223.6 L530.9 218.7 L533.7 227.1 L536.8 240.5 L537.1 234.4 L542.1 271.2 L538.3 221.8 L540.2 229.4 L540.9 220.6 L542.4 223.6 L543.9 234.6 Z" fill="none" stroke="#4e7ec0" stroke-width="3.4" stroke-linejoin="round"/>
<text x="532.0" y="302.8" text-anchor="end" font-family="Liberation Sans" font-size="12" fill="#595959">-15.0</text>
<text x="532.0" y="286.1" text-anchor="end" font-family="Liberation Sans" font-size="12" fill="#595959">-10.0</text>
<text x="532.0" y="269.3" text-anchor="end" font-family="Liberation Sans" font-size="12" fill="#595959">-5.0</text>
<text x="532.0" y="252.6" text-anchor="end" font-family="Liberation Sans" font-size="12" fill="#595959">0.0</text>
<text x="532.0" y="235.9" text-anchor="end" font-family="Liberation Sans" font-size="12" fill="#595959">5.0</text>
<text x="532.0" y="219.1" text-anchor="end" font-family="Liberation Sans" font-size="12" fill="#595959">10.0</text>
<text x="532.0" y="202.4" text-anchor="end" font-family="Liberation Sans" font-size="12" fill="#595959">15.0</text>
<text x="545.2" y="189.0" text-anchor="middle" font-family="Liberation Sans" font-size="11" fill="#595959">1</text>
<text x="556.7" y="195.9" text-anchor="middle" font-family="Liberation Sans" font-size="11" fill="#595959">5</text>
<text x="563.7" y="196.6" text-anchor="middle" font-family="Liberation Sans" font-size="11" fill="#595959">9</text>
<text x="573.8" y="197.9" text-anchor="middle" font-family="Liberation Sans" font-size="11" fill="#595959">13</text>
<text x="580.6" y="199.8" text-anchor="middle" font-family="Liberation Sans" font-size="11" fill="#595959">17</text>
<text x="587.4" y="202.1" text-anchor="middle" font-family="Liberation Sans" font-size="11" fill="#595959">21</text>
<text x="594.0" y="204.9" text-anchor="middle" font-family="Liberation Sans" font-size="11" fill="#595959">25</text>
<text x="600.3" y="208.2" text-anchor="middle" font-family="Liberation Sans" font-size="11" fill="#595959">29</text>
<text x="606.5" y="211.9" text-anchor="middle" font-family="Liberation Sans" font-size="11" fill="#595959">33</text>
<text x="612.4" y="216.1" text-anchor="middle" font-family="Liberation Sans" font-size="11" fill="#595959">37</text>
<text x="617.9" y="220.7" text-anchor="middle" font-family="Liberation Sans" font-size="11" fill="#595959">41</text>
<text x="623.2" y="225.8" text-anchor="middle" font-family="Liberation Sans" font-size="11" fill="#595959">45</text>
<text x="628.1" y="231.1" text-anchor="middle" font-family="Liberation Sans" font-size="11" fill="#595959">49</text>
<text x="632.7" y="236.9" text-anchor="middle" font-family="Liberation Sans" font-size="11" fill="#595959">53</text>
<text x="636.8" y="242.9" text-anchor="middle" font-family="Liberation Sans" font-size="11" fill="#595959">57</text>
<text x="640.6" y="249.3" text-anchor="middle" font-family="Liberation Sans" font-size="11" fill="#595959">61</text>
<text x="643.9" y="255.9" text-anchor="middle" font-family="Liberation Sans" font-size="11" fill="#595959">65</text>
<text x="646.8" y="262.8" text-anchor="middle" font-family="Liberation Sans" font-size="11" fill="#595959">69</text>
<text x="649.2" y="269.8" text-anchor="middle" font-family="Liberation Sans" font-size="11" fill="#595959">73</text>
<text x="651.1" y="277.0" text-anchor="middle" font-family="Liberation Sans" font-size="11" fill="#595959">77</text>
<text x="652.5" y="284.3" text-anchor="middle" font-family="Liberation Sans" font-size="11" fill="#595959">81</text>
<text x="653.5" y="291.7" text-anchor="middle" font-family="Liberation Sans" font-size="11" fill="#595959">85</text>
<text x="654.0" y="299.2" text-anchor="middle" font-family="Liberation Sans" font-size="11" fill="#595959">89</text>
<text x="653.9" y="306.7" text-anchor="middle" font-family="Liberation Sans" font-size="11" fill="#595959">93</text>
<text x="653.4" y="314.1" text-anchor="middle" font-family="Liberation Sans" font-size="11" fill="#595959">97</text>
<text x="655.4" y="321.5" text-anchor="middle" font-family="Liberation Sans" font-size="11" fill="#595959">101</text>
<text x="653.9" y="328.8" text-anchor="middle" font-family="Liberation Sans" font-size="11" fill="#595959">105</text>
<text x="651.9" y="336.0" text-anchor="middle" font-family="Liberation Sans" font-size="11" fill="#595959">109</text>
<text x="649.5" y="343.0" text-anchor="middle" font-family="Liberation Sans" font-size="11" fill="#595959">113</text>
<text x="646.6" y="349.8" text-anchor="middle" font-family="Liberation Sans" font-size="11" fill="#595959">117</text>
<text x="643.2" y="356.4" text-anchor="middle" font-family="Liberation Sans" font-size="11" fill="#595959">121</text>
<text x="639.4" y="362.7" text-anchor="middle" font-family="Liberation Sans" font-size="11" fill="#595959">125</text>
<text x="635.2" y="368.8" text-anchor="middle" font-family="Liberation Sans" font-size="11" fill="#595959">129</text>
<text x="630.6" y="374.5" text-anchor="middle" font-family="Liberation Sans" font-size="11" fill="#595959">133</text>
<text x="625.6" y="379.8" text-anchor="middle" font-family="Liberation Sans" font-size="11" fill="#595959">137</text>
<text x="620.3" y="384.8" text-anchor="middle" font-family="Liberation Sans" font-size="11" fill="#595959">141</text>
<text x="614.7" y="389.3" text-anchor="middle" font-family="Liberation Sans" font-size="11" fill="#595959">145</text>
<text x="608.8" y="393.5" text-anchor="middle" font-family="Liberation Sans" font-size="11" fill="#595959">149</text>
<text x="602.6" y="397.2" text-anchor="middle" font-family="Liberation Sans" font-size="11" fill="#595959">153</text>
<text x="596.2" y="400.4" text-anchor="middle" font-family="Liberation Sans" font-size="11" fill="#595959">157</text>
<text x="589.6" y="403.2" text-anchor="middle" font-family="Liberation Sans" font-size="11" fill="#595959">161</text>
<text x="582.8" y="405.4" text-anchor="middle" font-family="Liberation Sans" font-size="11" fill="#595959">165</text>
<text x="575.9" y="407.2" text-anchor="middle" font-family="Liberation Sans" font-size="11" fill="#595959">169</text>
<text x="568.9" y="408.4" text-anchor="middle" font-family="Liberation Sans" font-size="11" fill="#595959">173</text>
<text x="561.0" y="409.1" text-anchor="middle" font-family="Liberation Sans" font-size="11" fill="#595959">177</text>
<text x="545.2" y="414.2" text-anchor="middle" font-family="Liberation Sans" font-size="11" fill="#595959">181</text>
<text x="526.3" y="409.0" text-anchor="middle" font-family="Liberation Sans" font-size="11" fill="#595959">185</text>
<text x="519.3" y="408.1" text-anchor="middle" font-family="Liberation Sans" font-size="11" fill="#595959">189</text>
<text x="512.3" y="406.8" text-anchor="middle" font-family="Liberation Sans" font-size="11" fill="#595959">193</text>
<text x="505.4" y="404.9" text-anchor="middle" font-family="Liberation Sans" font-size="11" fill="#595959">197</text>
<text x="498.7" y="402.5" text-anchor="middle" font-family="Liberation Sans" font-size="11" fill="#595959">201</text>
<text x="492.2" y="399.6" text-anchor="middle" font-family="Liberation Sans" font-size="11" fill="#595959">205</text>
<text x="485.8" y="396.3" text-anchor="middle" font-family="Liberation Sans" font-size="11" fill="#595959">209</text>
<text x="479.7" y="392.5" text-anchor="middle" font-family="Liberation Sans" font-size="11" fill="#595959">213</text>
<text x="473.9" y="388.2" text-anchor="middle" font-family="Liberation Sans" font-size="11" fill="#595959">217</text>
<text x="468.3" y="383.6" text-anchor="middle" font-family="Liberation Sans" font-size="11" fill="#595959">221</text>
<text x="463.1" y="378.5" text-anchor="middle" font-family="Liberation Sans" font-size="11" fill="#595959">225</text>
<text x="458.2" y="373.1" text-anchor="middle" font-family="Liberation Sans" font-size="11" fill="#595959">229</text>
<text x="453.7" y="367.3" text-anchor="middle" font-family="Liberation Sans" font-size="11" fill="#595959">233</text>
<text x="449.6" y="361.2" text-anchor="middle" font-family="Liberation Sans" font-size="11" fill="#595959">237</text>
<text x="445.9" y="354.8" text-anchor="middle" font-family="Liberation Sans" font-size="11" fill="#595959">241</text>
<text x="442.7" y="348.2" text-anchor="middle" font-family="Liberation Sans" font-size="11" fill="#595959">245</text>
<text x="439.9" y="341.3" text-anchor="middle" font-family="Liberation Sans" font-size="11" fill="#595959">249</text>
<text x="437.5" y="334.2" text-anchor="middle" font-family="Liberation Sans" font-size="11" fill="#595959">253</text>
<text x="435.6" y="327.0" text-anchor="middle" font-family="Liberation Sans" font-size="11" fill="#595959">257</text>
<text x="434.3" y="319.7" text-anchor="middle" font-family="Liberation Sans" font-size="11" fill="#595959">261</text>
<text x="433.4" y="312.3" text-anchor="middle" font-family="Liberation Sans" font-size="11" fill="#595959">265</text>
<text x="433.0" y="304.8" text-anchor="middle" font-family="Liberation Sans" font-size="11" fill="#595959">269</text>
<text x="433.0" y="297.3" text-anchor="middle" font-family="Liberation Sans" font-size="11" fill="#595959">273</text>
<text x="433.6" y="289.9" text-anchor="middle" font-family="Liberation Sans" font-size="11" fill="#595959">277</text>
<text x="434.7" y="282.5" text-anchor="middle" font-family="Liberation Sans" font-size="11" fill="#595959">281</text>
<text x="436.3" y="275.2" text-anchor="middle" font-family="Liberation Sans" font-size="11" fill="#595959">285</text>
<text x="438.3" y="268.0" text-anchor="middle" font-family="Liberation Sans" font-size="11" fill="#595959">289</text>
<text x="440.9" y="261.0" text-anchor="middle" font-family="Liberation Sans" font-size="11" fill="#595959">293</text>
<text x="443.8" y="254.2" text-anchor="middle" font-family="Liberation Sans" font-size="11" fill="#595959">297</text>
<text x="447.3" y="247.7" text-anchor="middle" font-family="Liberation Sans" font-size="11" fill="#595959">301</text>
<text x="451.1" y="241.4" text-anchor="middle" font-family="Liberation Sans" font-size="11" fill="#595959">305</text>
<text x="455.4" y="235.4" text-anchor="middle" font-family="Liberation Sans" font-size="11" fill="#595959">309</text>
<text x="460.0" y="229.8" text-anchor="middle" font-family="Liberation Sans" font-size="11" fill="#595959">313</text>
<text x="465.0" y="224.5" text-anchor="middle" font-family="Liberation Sans" font-size="11" fill="#595959">317</text>
<text x="470.4" y="219.5" text-anchor="middle" font-family="Liberation Sans" font-size="11" fill="#595959">321</text>
<text x="476.0" y="215.0" text-anchor="middle" font-family="Liberation Sans" font-size="11" fill="#595959">325</text>
<text x="482.0" y="210.9" text-anchor="middle" font-family="Liberation Sans" font-size="11" fill="#595959">329</text>
<text x="488.2" y="207.3" text-anchor="middle" font-family="Liberation Sans" font-size="11" fill="#595959">333</text>
<text x="494.6" y="204.1" text-anchor="middle" font-family="Liberation Sans" font-size="11" fill="#595959">337</text>
<text x="501.2" y="201.5" text-anchor="middle" font-family="Liberation Sans" font-size="11" fill="#595959">341</text>
<text x="508.0" y="199.3" text-anchor="middle" font-family="Liberation Sans" font-size="11" fill="#595959">345</text>
<text x="514.9" y="197.6" text-anchor="middle" font-family="Liberation Sans" font-size="11" fill="#595959">349</text>
<text x="521.9" y="196.4" text-anchor="middle" font-family="Liberation Sans" font-size="11" fill="#595959">353</text>
<text x="531.3" y="195.7" text-anchor="middle" font-family="Liberation Sans" font-size="11" fill="#595959">357</text>
<text x="545" y="165.5" text-anchor="middle" font-family="Liberation Sans" font-size="17.5" fill="#595959">Diagrammtitel</text>
<circle cx="306.5" cy="138.5" r="4.3" fill="#fff" stroke="#8f8f8f" stroke-width="1.9"/>
<circle cx="306.5" cy="281.5" r="4.3" fill="#fff" stroke="#8f8f8f" stroke-width="1.9"/>
<circle cx="306.5" cy="425.5" r="4.3" fill="#fff" stroke="#8f8f8f" stroke-width="1.9"/>
<circle cx="545.5" cy="138.5" r="4.3" fill="#fff" stroke="#8f8f8f" stroke-width="1.9"/>
<circle cx="545.5" cy="425.5" r="4.3" fill="#fff" stroke="#8f8f8f" stroke-width="1.9"/>
<circle cx="785.5" cy="138.5" r="4.3" fill="#fff" stroke="#8f8f8f" stroke-width="1.9"/>
<circle cx="785.5" cy="281.5" r="4.3" fill="#fff" stroke="#8f8f8f" stroke-width="1.9"/>
<circle cx="785.5" cy="425.5" r="4.3" fill="#fff" stroke="#8f8f8f" stroke-width="1.9"/>
</svg>
<div style="position:absolute;left:790px;top:137px;width:28px;height:28px;background:#fff;border:1px solid #ababab;"></div>
<div style="position:absolute;left:790px;top:175px;width:28px;height:28px;background:#fff;border:1px solid #ababab;"></div>
<div style="position:absolute;left:790px;top:213px;width:28px;height:28px;background:#fff;border:1px solid #ababab;"></div>
<svg style="position:absolute;left:790px;top:137px" width="28" height="104">
<path d="M14 7 V21 M7 14 H21" stroke="#7ab39a" stroke-width="3.6"/>
<path d="M21 43 L13.5 50 L15.5 52 Z" fill="#7f7f7f"/>
<path d="M6 60 C9 58 10 53 13 52 L15 54 C14 57 10 60 6 60 Z" fill="#6b9bd6"/>
<path d="M6 82 H22 L16 89 V97 H12 V89 Z" fill="#7f7f7f"/>
</svg>
<div style="position:absolute;left:0px;top:678px;width:906px;height:29px;background:#e6e6e6;"></div>
<div style="position:absolute;left:0px;top:678px;width:906px;height:1px;background:#c6c6c6;"></div>
<svg style="position:absolute;left:0;top:679px" width="100" height="27"><path d="M31 8.5 V15.5 L27 12 Z" fill="#c0c0c0"/><path d="M56 8.5 V15.5 L60 12 Z" fill="#c0c0c0"/></svg>
<div style="position:absolute;left:176px;top:678px;width:77px;height:24px;background:#fff;border-left:1px solid #c6c6c6;border-right:1px solid #c6c6c6;"></div>
<div style="position:absolute;left:176px;top:700px;width:77px;height:2px;background:#217346;"></div>
<div style="position:absolute;left:100px;top:682px;width:1px;height:20px;background:#9a9a9a;"></div>
<div style="position:absolute;left:306px;top:682px;width:1px;height:20px;background:#9a9a9a;"></div>
<div style="position:absolute;left:370px;top:682px;width:1px;height:20px;background:#9a9a9a;"></div>
<div style="position:absolute;left:412px;top:682px;width:1px;height:20px;background:#9a9a9a;"></div>
<div style="position:absolute;left:463px;top:682px;width:1px;height:20px;background:#9a9a9a;"></div>
<div style="position:absolute;left:503px;top:682px;width:1px;height:20px;background:#9a9a9a;"></div>
<div class="st" style="left:112.3px;color:#444;">Tabelle1</div>
<div class="st" style="left:187.5px;color:#217346;font-weight:bold;">Tabelle2</div>
<div class="st" style="left:264.4px;color:#444;">Data</div>
<div class="st" style="left:316.0px;color:#444;">80-850</div>
<div class="st" style="left:380.0px;color:#444;">FM</div>
<div class="st" style="left:424.2px;color:#444;">DAB</div>
<div class="st" style="left:475.1px;color:#444;">TV</div>
<svg style="position:absolute;left:535px;top:682px" width="20" height="20"><circle cx="10" cy="10" r="7.5" fill="none" stroke="#777" stroke-width="1.3"/><path d="M10 6 V14 M6 10 H14" stroke="#777" stroke-width="1.6"/></svg>
<div style="position:absolute;left:819px;top:688px;width:2px;height:2px;background:#a8a8a8;"></div>
<div style="position:absolute;left:819px;top:692px;width:2px;height:2px;background:#a8a8a8;"></div>
<div style="position:absolute;left:819px;top:696px;width:2px;height:2px;background:#a8a8a8;"></div>
<div style="position:absolute;left:836px;top:685px;width:70px;height:15px;background:#dadada;"></div>
<div style="position:absolute;left:836px;top:685px;width:15px;height:15px;background:#fff;border:1px solid #ababab;"></div>
<div style="position:absolute;left:850px;top:685px;width:18px;height:15px;background:#fff;border:1px solid #ababab;"></div>
<svg style="position:absolute;left:836px;top:685px" width="15" height="15"><path d="M5 7.5 L9 4 V11 Z" fill="#555"/></svg>
<div style="position:absolute;left:0px;top:706px;width:906px;height:1px;background:#c6c6c6;"></div>
<div style="position:absolute;left:0px;top:707px;width:906px;height:21px;background:#f0f0f0;"></div>
<div style="position:absolute;left:7px;top:709px;font-size:11.5px;line-height:16px;color:#444;white-space:nowrap;">Bereit</div>
<div style="position:absolute;left:811px;top:709px;font-size:12px;line-height:16px;color:#444;white-space:nowrap;">Mittelwert: 4.3</div>
<div style="position:absolute;left:900px;top:709px;font-size:11.5px;line-height:16px;color:#444;white-space:nowrap;">A</div>
<div style="position:absolute;left:0px;top:728px;width:906px;height:3px;background:#0a0a0a;"></div>
<div style="position:absolute;left:48px;top:728px;width:343px;height:3px;background:#2b2b2b;"></div>
<div style="position:absolute;left:589px;top:728px;width:48px;height:3px;background:#3a3d3c;"></div>
</body></html>
